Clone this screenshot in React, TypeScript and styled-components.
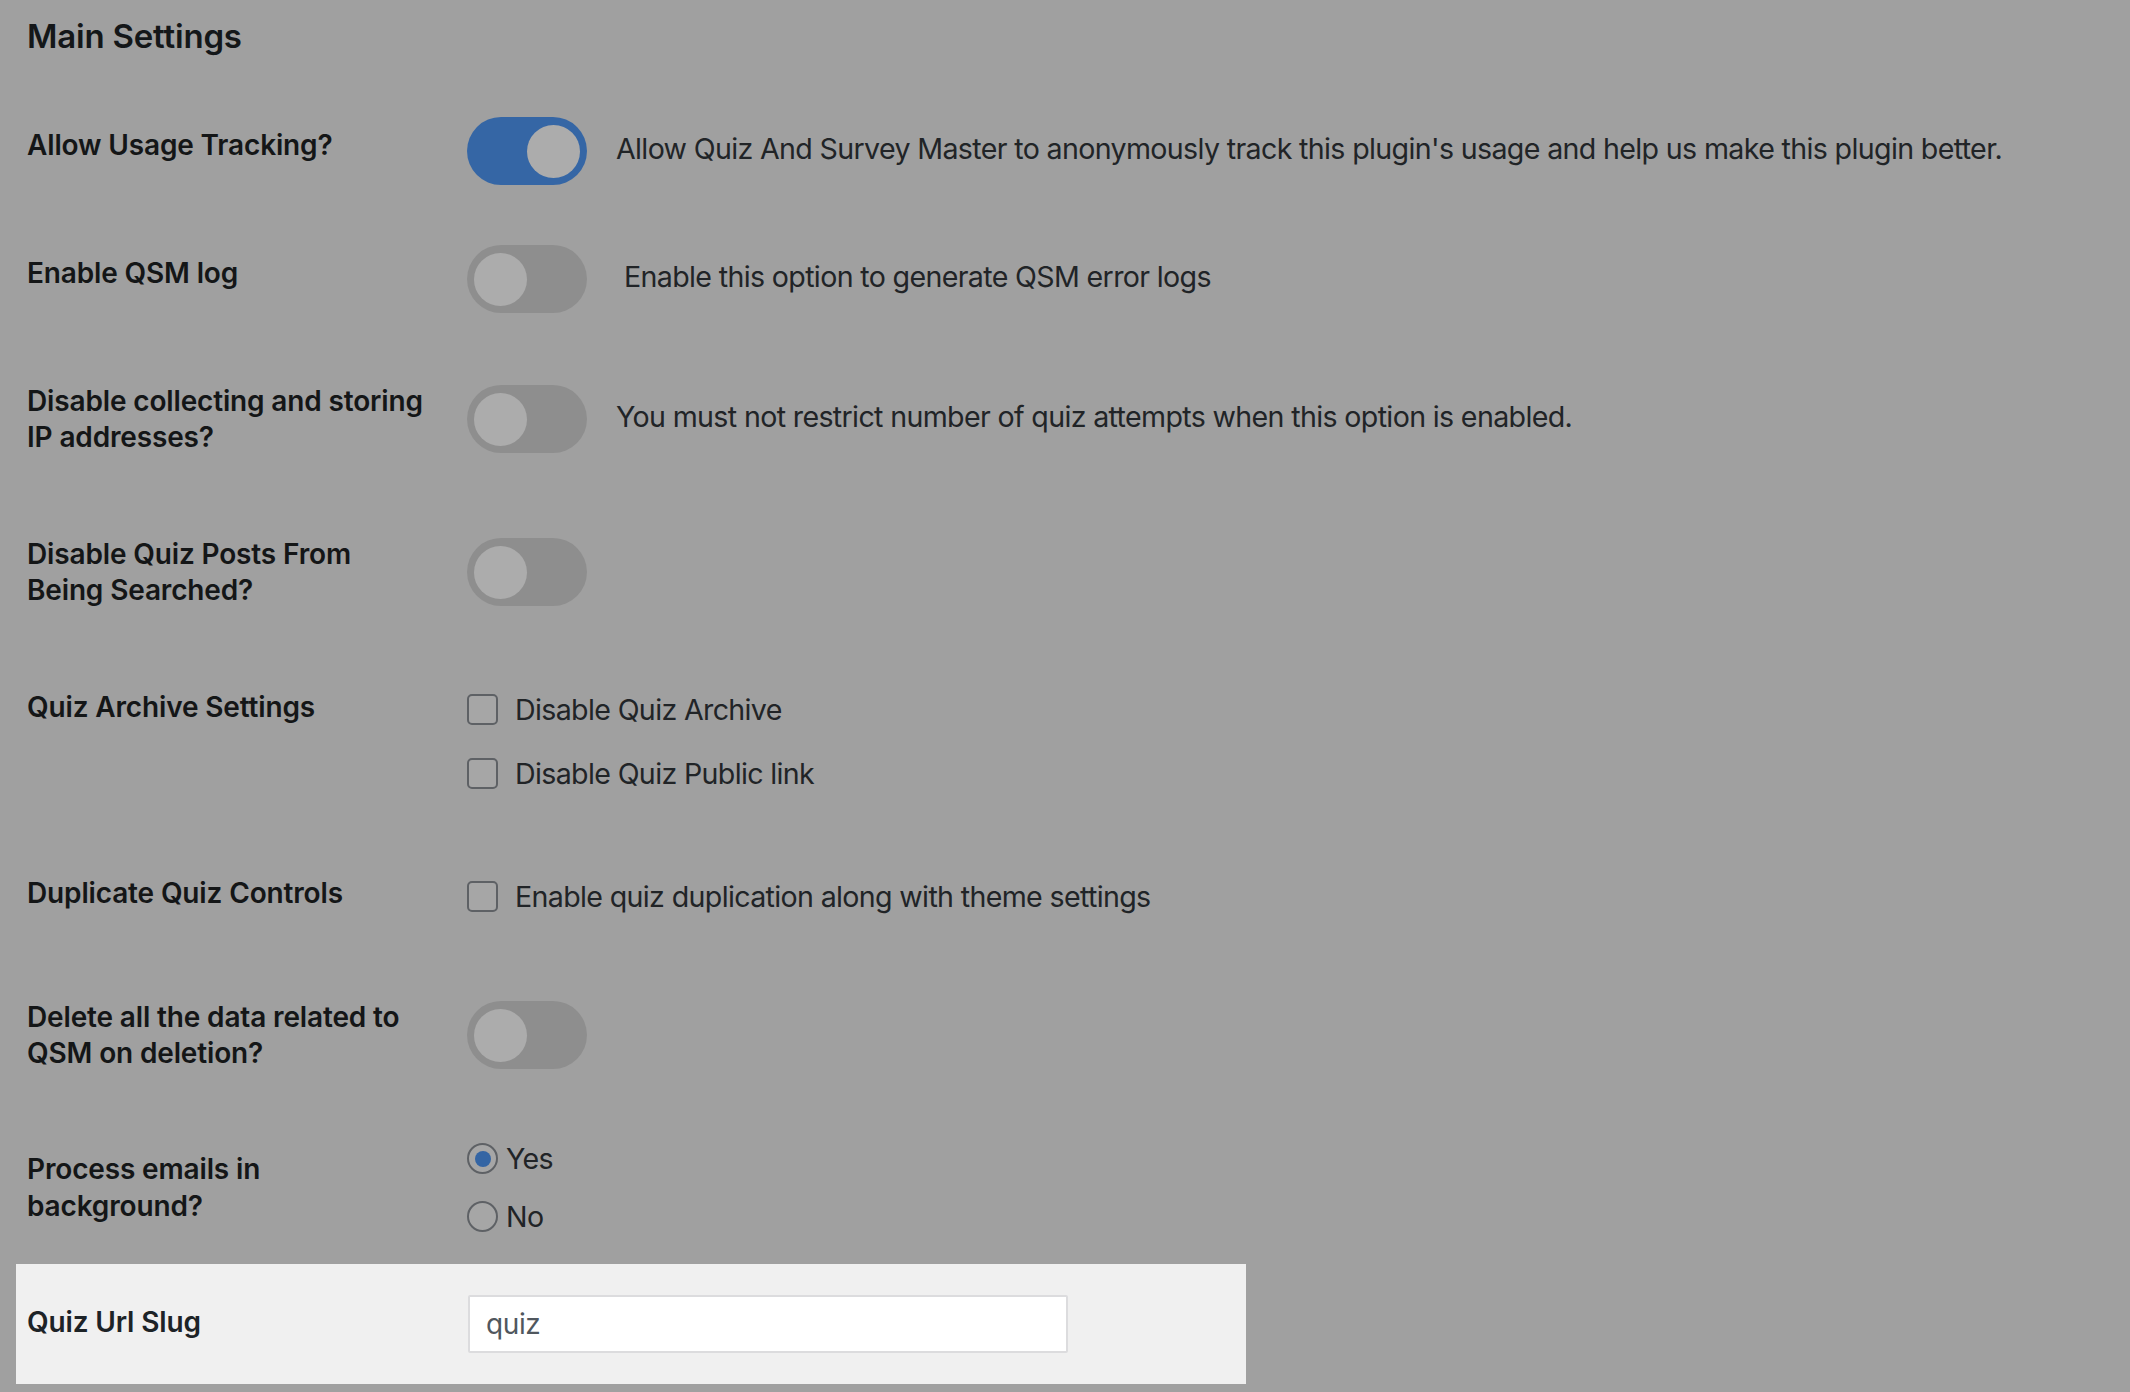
import React from "react";
import styled, { createGlobalStyle } from "styled-components";

const Global = createGlobalStyle`
  html, body { margin: 0; padding: 0; }
  body {
    background: #a0a0a0;
    font-family: Inter, "Noto Sans", "Liberation Sans", sans-serif;
    -webkit-font-smoothing: antialiased;
  }
`;

const Page = styled.div`
  padding: 0 0 0 16px;
  width: 2130px;
  box-sizing: border-box;
`;

const Heading = styled.h2`
  margin: 15px 0 29px 0;
  padding-left: 11px;
  font-size: 33px;
  line-height: 43px;
  font-weight: 600;
  color: #141719;
  letter-spacing: -0.2px;
`;

const Row = styled.div<{ $highlight?: boolean }>`
  display: grid;
  grid-template-columns: 440px 1fr;
  padding-left: 11px;
  width: ${(p) => (p.$highlight ? "1230px" : "auto")};
  box-sizing: border-box;
  background: ${(p) => (p.$highlight ? "#f0f0f0" : "transparent")};
`;

const Label = styled.div<{ $highlight?: boolean }>`
  padding: 40px 0;
  font-size: 28px;
  line-height: 36.4px;
  font-weight: 600;
  color: ${(p) => (p.$highlight ? "#1d2327" : "#141617")};
  letter-spacing: -0.15px;
  white-space: nowrap;
`;

const Control = styled.div<{ $pad?: number }>`
  display: flex;
  align-items: center;
  padding: ${(p) => (p.$pad ?? 30)}px 0;
`;

const Stack = styled.div`
  display: flex;
  flex-direction: column;
`;

const Track = styled.span<{ $on?: boolean }>`
  display: inline-flex;
  align-items: center;
  justify-content: ${(p) => (p.$on ? "flex-end" : "flex-start")};
  flex: none;
  width: 120px;
  height: 68px;
  padding: 0 7px;
  box-sizing: border-box;
  border-radius: 34px;
  background: ${(p) => (p.$on ? "#3566a5" : "#8e8e8e")};
`;

const Knob = styled.span`
  width: 53px;
  height: 53px;
  border-radius: 50%;
  background: #acacac;
`;

const Description = styled.span<{ $indent?: number }>`
  margin-left: ${(p) => 29 + (p.$indent ?? 0)}px;
  margin-top: -4px;
  font-size: 28.6px;
  line-height: 38px;
  color: #212427;
  letter-spacing: -0.65px;
  white-space: nowrap;
`;

const OptionLine = styled.label<{ $h: number }>`
  display: flex;
  align-items: center;
  height: ${(p) => p.$h}px;
  font-size: 28.6px;
  color: #212427;
  letter-spacing: -0.65px;
  white-space: nowrap;
`;

const Box = styled.span`
  flex: none;
  width: 31px;
  height: 31px;
  box-sizing: border-box;
  border: 2px solid #5e6165;
  border-radius: 5px;
  background: #a6a6a6;
  margin-right: 17px;
`;

const Radio = styled.span<{ $checked?: boolean }>`
  flex: none;
  display: inline-flex;
  align-items: center;
  justify-content: center;
  width: 31px;
  height: 31px;
  box-sizing: border-box;
  border: 2px solid #5e6165;
  border-radius: 50%;
  background: #a6a6a6;
  margin-right: 8px;
  &::after {
    content: "";
    width: 16px;
    height: 16px;
    border-radius: 50%;
    background: ${(p) => (p.$checked ? "#3465a4" : "transparent")};
  }
`;

const TextInput = styled.input`
  width: 600px;
  height: 58px;
  box-sizing: border-box;
  border: 2px solid #dcdcde;
  border-radius: 2px;
  background: #ffffff;
  padding: 0 16px;
  margin-left: 1px;
  font-family: Inter, "Noto Sans", "Liberation Sans", sans-serif;
  font-size: 28px;
  letter-spacing: -0.4px;
  color: #50575e;
  outline: none;
`;

function Toggle({ on }: { on?: boolean }) {
  return (
    <Track $on={on}>
      <Knob />
    </Track>
  );
}

export default function App() {
  return (
    <>
      <Global />
      <Page>
        <Heading>Main Settings</Heading>

        <Row>
          <Label>Allow Usage Tracking?</Label>
          <Control>
            <Toggle on />
            <Description>
              Allow Quiz And Survey Master to anonymously track this plugin's usage and help us make this plugin better.
            </Description>
          </Control>
        </Row>

        <Row>
          <Label>Enable QSM log</Label>
          <Control>
            <Toggle />
            <Description $indent={8}>Enable this option to generate QSM error logs</Description>
          </Control>
        </Row>

        <Row>
          <Label>
            Disable collecting and storing
            <br />
            IP addresses?
          </Label>
          <Control>
            <Toggle />
            <Description>
              You must not restrict number of quiz attempts when this option is enabled.
            </Description>
          </Control>
        </Row>

        <Row>
          <Label>
            Disable Quiz Posts From
            <br />
            Being Searched?
          </Label>
          <Control>
            <Toggle />
          </Control>
        </Row>

        <Row>
          <Label>Quiz Archive Settings</Label>
          <Control $pad={29}>
            <Stack>
              <OptionLine $h={64}>
                <Box />
                Disable Quiz Archive
              </OptionLine>
              <OptionLine $h={64}>
                <Box />
                Disable Quiz Public link
              </OptionLine>
            </Stack>
          </Control>
        </Row>

        <Row>
          <Label>Duplicate Quiz Controls</Label>
          <Control>
            <OptionLine $h={64}>
              <Box />
              Enable quiz duplication along with theme settings
            </OptionLine>
          </Control>
        </Row>

        <Row>
          <Label>
            Delete all the data related to
            <br />
            QSM on deletion?
          </Label>
          <Control>
            <Toggle />
          </Control>
        </Row>

        <Row>
          <Label>
            Process emails in
            <br />
            background?
          </Label>
          <Control $pad={18}>
            <Stack>
              <OptionLine $h={58}>
                <Radio $checked />
                Yes
              </OptionLine>
              <OptionLine $h={58}>
                <Radio />
                No
              </OptionLine>
            </Stack>
          </Control>
        </Row>

        <Row $highlight>
          <Label $highlight>Quiz Url Slug</Label>
          <Control $pad={31}>
            <TextInput defaultValue="quiz" />
          </Control>
        </Row>
      </Page>
    </>
  );
}
